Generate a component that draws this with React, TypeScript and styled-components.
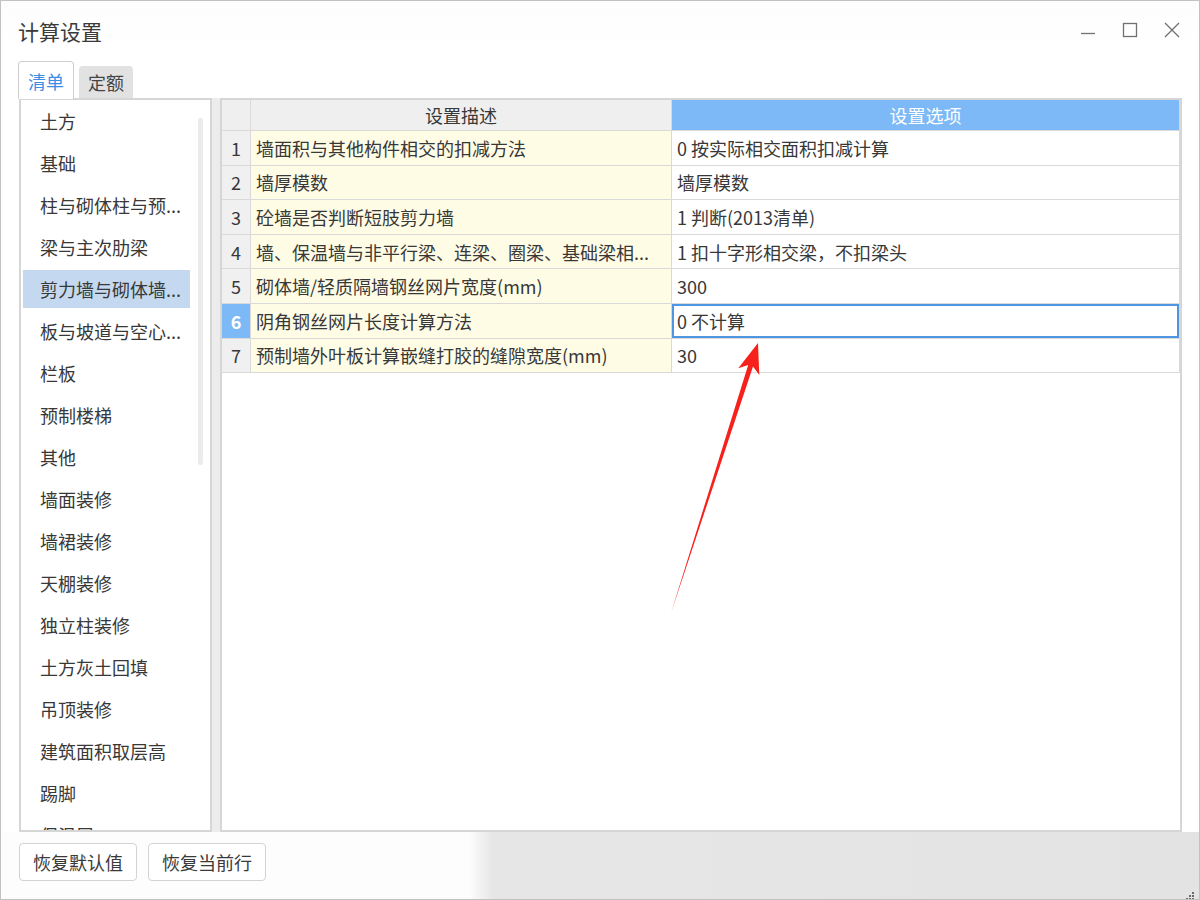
import React from "react";
import styled, { createGlobalStyle } from "styled-components";

const GlobalStyle = createGlobalStyle`
  html, body { margin: 0; padding: 0; background: #ffffff; }
  body { font-family: "Noto Sans CJK SC", "Microsoft YaHei", "Noto Sans", sans-serif; color: #333; }
  * { box-sizing: border-box; }
`;

const Window = styled.div`
  position: relative;
  width: 1200px;
  height: 900px;
  border: 1px solid #c2c2c2;
  background: #ffffff;
  display: flex;
  flex-direction: column;
  overflow: hidden;
`;

const TitleBar = styled.div`
  height: 59px;
  display: flex;
  align-items: center;
  padding-left: 17px;
  padding-right: 19px;
  background: linear-gradient(to bottom, #fdfdfd, #ffffff);
`;

const Title = styled.div`
  font-size: 21px;
  line-height: 24px;
  color: #3a3a3a;
  margin-top: 1px;
`;

const Controls = styled.div`
  margin-left: auto;
  display: flex;
  align-items: center;
  gap: 26px;
  color: #6f6f6f;
  margin-top: -1px;
`;

const CtrlBtn = styled.div`
  width: 16px;
  height: 16px;
  display: flex;
  align-items: center;
  justify-content: center;
`;

const TabRow = styled.div`
  height: 38px;
  display: flex;
  align-items: flex-end;
  gap: 5px;
  padding-left: 17px;
`;

const Tab = styled.div<{ $active?: boolean }>`
  height: ${(p) => (p.$active ? "38px" : "32px")};
  padding: 0 9px;
  display: flex;
  align-items: center;
  font-size: 18px;
  line-height: 22px;
  color: ${(p) => (p.$active ? "#3b8de6" : "#444")};
  background: ${(p) => (p.$active ? "#ffffff" : "#e2e2e2")};
  border: ${(p) => (p.$active ? "1px solid #cfcfcf" : "none")};
  border-bottom: none;
  border-radius: 4px 4px 0 0;
  margin-bottom: ${(p) => (p.$active ? "-1px" : "0")};
  position: relative;
  z-index: 1;
`;

const Body = styled.div`
  height: 734px;
  display: flex;
  margin: 0 17px 0 18px;
`;

const LeftPanel = styled.div`
  width: 193px;
  border: 2px solid #d6d6d6;
  background: #fff;
  display: flex;
  overflow: hidden;
`;

const List = styled.div`
  flex: 1;
  display: flex;
  flex-direction: column;
  gap: 4px;
  padding: 2px 0 0 2px;
`;

const Item = styled.div<{ $selected?: boolean }>`
  flex: none;
  height: 38px;
  width: 167px;
  display: flex;
  align-items: center;
  padding-left: 17px;
  font-size: 18px;
  line-height: 22px;
  color: #383838;
  white-space: nowrap;
  background: ${(p) => (p.$selected ? "#c4d9f0" : "transparent")};
`;

const Track = styled.div`
  width: 6px;
  margin-right: 6px;
  padding-top: 18px;
`;

const Thumb = styled.div`
  width: 5px;
  height: 347px;
  border-radius: 3px;
  background: #ebebeb;
`;

const Splitter = styled.div`
  width: 8px;
  background: #ececec;
`;

const GridPanel = styled.div`
  flex: 1;
  border: 2px solid #d6d6d6;
  background: #fff;
`;

const Grid = styled.div`
  display: grid;
  grid-template-columns: 29px 421px 1fr;
  grid-template-rows: 31px repeat(7, 34.6px);
`;

const Cell = styled.div<{ $kind: "corner" | "head" | "headSel" | "num" | "numSel" | "desc" | "val" | "valSel" }>`
  border-right: 1px solid #d9d9d9;
  border-bottom: 1px solid #d9d9d9;
  display: flex;
  align-items: center;
  font-size: 18px;
  line-height: 22px;
  white-space: nowrap;
  overflow: hidden;
  color: #383838;
  padding-left: 5px;
  ${(p) => {
    switch (p.$kind) {
      case "corner":
        return "background:#efefef;";
      case "head":
        return "background:#efefef; justify-content:center; padding-left:0;";
      case "headSel":
        return "background:#7db9f6; color:#fff; justify-content:center; padding-left:0;";
      case "num":
        return "background:#f0f0f0; justify-content:center; padding-left:0;";
      case "numSel":
        return "background:#7db9f6; color:#fff; justify-content:center; padding-left:0; font-weight:bold;";
      case "desc":
        return "background:#fffce6;";
      case "val":
        return "background:#fff;";
      case "valSel":
        return "background:#fff; box-shadow: inset 0 0 0 2px #4f95e2;";
    }
  }}
`;

const Footer = styled.div`
  flex: 1;
  display: flex;
  align-items: flex-start;
  gap: 11px;
  padding: 11px 4px 3px 18px;
  background: linear-gradient(to right, #fdfdfd 0, #fdfdfd 468px, #e6e6e6 492px, #e3e3e3 100%);
`;

const Button = styled.button`
  height: 38px;
  width: 118px;
  border: 1px solid #d3d3d3;
  border-radius: 4px;
  background: #fff;
  font-family: inherit;
  font-size: 18px;
  line-height: 22px;
  color: #3a3a3a;
  padding: 0;
`;

const Grip = styled.div`
  margin-left: auto;
  align-self: flex-end;
  width: 12px;
  height: 12px;
`;

const ArrowLayer = styled.svg`
  position: absolute;
  left: 0;
  top: 0;
  pointer-events: none;
`;

const listItems = [
  "土方",
  "基础",
  "柱与砌体柱与预...",
  "梁与主次肋梁",
  "剪力墙与砌体墙...",
  "板与坡道与空心...",
  "栏板",
  "预制楼梯",
  "其他",
  "墙面装修",
  "墙裙装修",
  "天棚装修",
  "独立柱装修",
  "土方灰土回填",
  "吊顶装修",
  "建筑面积取层高",
  "踢脚",
  "保温层",
];

const rows = [
  ["墙面积与其他构件相交的扣减方法", "0 按实际相交面积扣减计算"],
  ["墙厚模数", "墙厚模数"],
  ["砼墙是否判断短肢剪力墙", "1 判断(2013清单)"],
  ["墙、保温墙与非平行梁、连梁、圈梁、基础梁相...", "1 扣十字形相交梁，不扣梁头"],
  ["砌体墙/轻质隔墙钢丝网片宽度(mm)", "300"],
  ["阴角钢丝网片长度计算方法", "0 不计算"],
  ["预制墙外叶板计算嵌缝打胶的缝隙宽度(mm)", "30"],
];

export default function App() {
  return (
    <>
      <GlobalStyle />
      <Window>
        <TitleBar>
          <Title>计算设置</Title>
          <Controls>
            <CtrlBtn>
              <svg width="16" height="16" viewBox="0 0 16 16">
                <line x1="1" y1="11.5" x2="15" y2="11.5" stroke="#707070" strokeWidth="1.3" />
              </svg>
            </CtrlBtn>
            <CtrlBtn>
              <svg width="16" height="16" viewBox="0 0 16 16">
                <rect x="1.5" y="1.5" width="13" height="13" fill="none" stroke="#707070" strokeWidth="1.3" />
              </svg>
            </CtrlBtn>
            <CtrlBtn>
              <svg width="16" height="16" viewBox="0 0 16 16">
                <path d="M1 1 L15 15 M15 1 L1 15" stroke="#707070" strokeWidth="1.3" />
              </svg>
            </CtrlBtn>
          </Controls>
        </TitleBar>
        <TabRow>
          <Tab $active>清单</Tab>
          <Tab>定额</Tab>
        </TabRow>
        <Body>
          <LeftPanel>
            <List>
              {listItems.map((t, i) => (
                <Item key={t} $selected={i === 4}>
                  {t}
                </Item>
              ))}
            </List>
            <Track>
              <Thumb />
            </Track>
          </LeftPanel>
          <Splitter />
          <GridPanel>
            <Grid>
              <Cell $kind="corner" />
              <Cell $kind="head">设置描述</Cell>
              <Cell $kind="headSel">设置选项</Cell>
              {rows.map((r, i) => (
                <React.Fragment key={i}>
                  <Cell $kind={i === 5 ? "numSel" : "num"}>{i + 1}</Cell>
                  <Cell $kind="desc">{r[0]}</Cell>
                  <Cell $kind={i === 5 ? "valSel" : "val"}>{r[1]}</Cell>
                </React.Fragment>
              ))}
            </Grid>
          </GridPanel>
        </Body>
        <Footer>
          <Button>恢复默认值</Button>
          <Button>恢复当前行</Button>
          <Grip>
            <svg width="12" height="12" viewBox="0 0 12 12">
              {[
                [9, 1],
                [9, 4],
                [6, 4],
                [9, 7],
                [6, 7],
                [3, 7],
                [9, 10],
                [6, 10],
                [3, 10],
                [0, 10],
              ].map(([x, y], k) => (
                <rect key={k} x={x} y={y} width="2" height="2" fill="#6b6b6b" />
              ))}
            </svg>
          </Grip>
        </Footer>
        <ArrowLayer width="1200" height="900" viewBox="0 0 1200 900">
          <polygon
            points="670,612 747.2,364.0 737.3,367.2 757,342 758.3,374.0 752.0,365.6"
            fill="#f5211a"
          />
        </ArrowLayer>
      </Window>
    </>
  );
}
